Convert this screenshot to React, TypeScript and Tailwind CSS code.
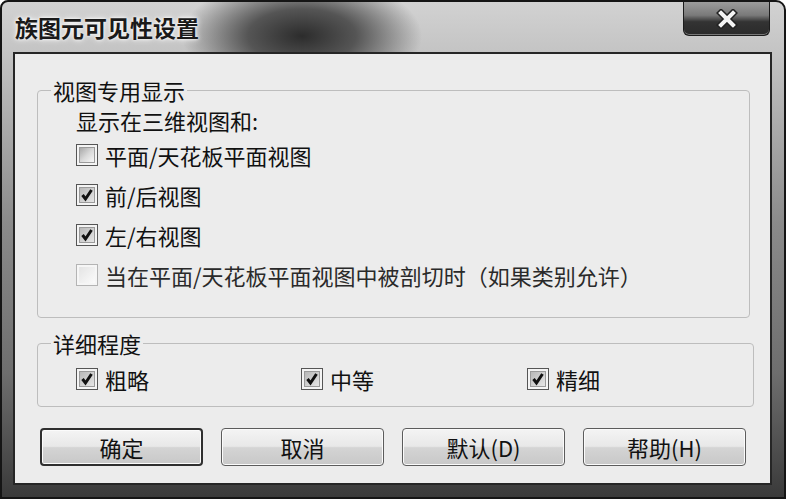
import React from 'react';

const font = { fontFamily: '"Noto Sans CJK SC", "Noto Sans", sans-serif' };

function Box({ state }: { state: 'on' | 'off' | 'disabled' }) {
  if (state === 'disabled') {
    return <span className="w-[22px] h-[22px] shrink-0 border border-[#b4b4b4] bg-[#f6f6f6] p-[2px] flex">
        <span className="flex-1 bg-gradient-to-br from-[#e4e4e4] to-[#fbfbfb]" />
      </span>;
  }
  return <span className="w-[22px] h-[22px] shrink-0 border border-[#555] bg-[#f4f4f4] p-[2px] flex">
      <span className={state === 'on' ? 'flex-1 flex items-center justify-center border border-[#9a9a9a] bg-gradient-to-br from-[#b8b8b8] to-[#e6e6e6]' : 'flex-1 border border-[#9a9a9a] bg-gradient-to-br from-[#a8a8a8] via-[#d8d8d8] to-[#f8f8f8]'}>
        {state === 'on' && <svg width="14" height="14" viewBox="0 0 14 14">
            <path d="M2.5 7 L5.5 11 L11.5 2" fill="none" stroke="#111" strokeWidth="3" strokeLinejoin="miter" />
          </svg>}
      </span>
    </span>;
}

function Check({ label, state }: { label: string; state: 'on' | 'off' | 'disabled' }) {
  return <div className="flex items-center gap-[7px]">
      <Box state={state} />
      <span className={state === 'disabled' ? 'text-[22px] leading-[24px] text-[#2a2a2a]' : 'text-[22px] leading-[24px] text-[#111]'}>{label}</span>
    </div>;
}

function Btn({ label, primary }: { label: string; primary?: boolean }) {
  return <button className={(primary ? 'border-2 border-[#2f2f2f] ' : 'border border-[#5c5c5c] ') + 'w-[163px] h-[38px] rounded-[4px] bg-[linear-gradient(180deg,#f4f4f4_0%,#e8e8e8_48%,#d4d4d4_52%,#c8c8c8_100%)] shadow-[inset_0_0_0_1px_#fbfbfb] text-[22px] leading-[24px] text-[#111] flex items-center justify-center'}>
      {label}
    </button>;
}

export default function App() {
  return <div className="w-[789px] h-[499px] bg-white" style={font}>
      <div className="w-[786px] h-[499px] rounded-tl-[8px] rounded-tr-[10px] border-2 border-[#151515] flex flex-col bg-[radial-gradient(ellipse_120px_60px_at_300px_34px,#2c2c2c_0%,#555_45%,transparent_100%),linear-gradient(180deg,#d2d2d2_0%,#c4c4c4_10%,#8a8a8a_45%,#6e6e6e_75%,#3a3a3a_100%)]">
        <div className="h-[50px] flex items-start justify-between">
          <h1 className="pl-[13px] h-[50px] flex items-center text-[23px] font-bold text-[#1a1a1a] [text-shadow:0_0_6px_#fff,0_0_3px_#fff]">族图元可见性设置</h1>
          <button className="mr-[14px] w-[87px] h-[34px] rounded-b-[6px] border border-t-0 border-[#1c1c1c] bg-[linear-gradient(180deg,#9c9c9c_0%,#7a7a7a_40%,#333_60%,#2a2a2a_100%)] shadow-[inset_0_-1px_0_#777] flex items-center justify-center">
            <svg width="24" height="20" viewBox="0 0 24 20">
              <path d="M6 4 L18 16 M18 4 L6 16" stroke="#222" strokeWidth="7" strokeLinecap="square" />
              <path d="M6 4 L18 16 M18 4 L6 16" stroke="#f4f4f4" strokeWidth="4" strokeLinecap="square" />
            </svg>
          </button>
        </div>
        <div className="ml-[11px] mr-[12px] h-[433px] border-2 border-[#262626] bg-[#ececec] flex flex-col">
          <fieldset className="ml-[22px] mt-[24px] w-[713px] border border-[#bdbdbd] rounded-[4px] pb-[22px]">
            <legend className="ml-[13px] px-[2px] text-[22px] leading-[24px] text-[#111]">视图专用显示</legend>
            <div className="pl-[38px]">
              <div className="mt-[6px] text-[22px] leading-[24px] text-[#111]">显示在三维视图和:</div>
              <div className="mt-[3px] flex flex-col">
                <div className="h-[40px] flex items-center"><Check label="平面/天花板平面视图" state="off" /></div>
                <div className="h-[40px] flex items-center"><Check label="前/后视图" state="on" /></div>
                <div className="h-[40px] flex items-center"><Check label="左/右视图" state="on" /></div>
                <div className="h-[40px] flex items-center"><Check label="当在平面/天花板平面视图中被剖切时（如果类别允许）" state="disabled" /></div>
              </div>
            </div>
          </fieldset>
          <fieldset className="ml-[22px] mt-[13px] w-[713px] border border-[#bdbdbd] rounded-[4px] pb-[12px]">
            <legend className="ml-[13px] px-[2px] text-[22px] leading-[24px] text-[#111]">详细程度</legend>
            <div className="pl-[38px] mt-[9px] h-[30px] grid grid-cols-[225px_226px_226px] items-center">
              <Check label="粗略" state="on" />
              <Check label="中等" state="on" />
              <Check label="精细" state="on" />
            </div>
          </fieldset>
          <div className="mt-[21px] pl-[25px] flex gap-[18px]">
            <Btn label="确定" primary />
            <Btn label="取消" />
            <Btn label="默认(D)" />
            <Btn label="帮助(H)" />
          </div>
        </div>
      </div>
    </div>;
}
